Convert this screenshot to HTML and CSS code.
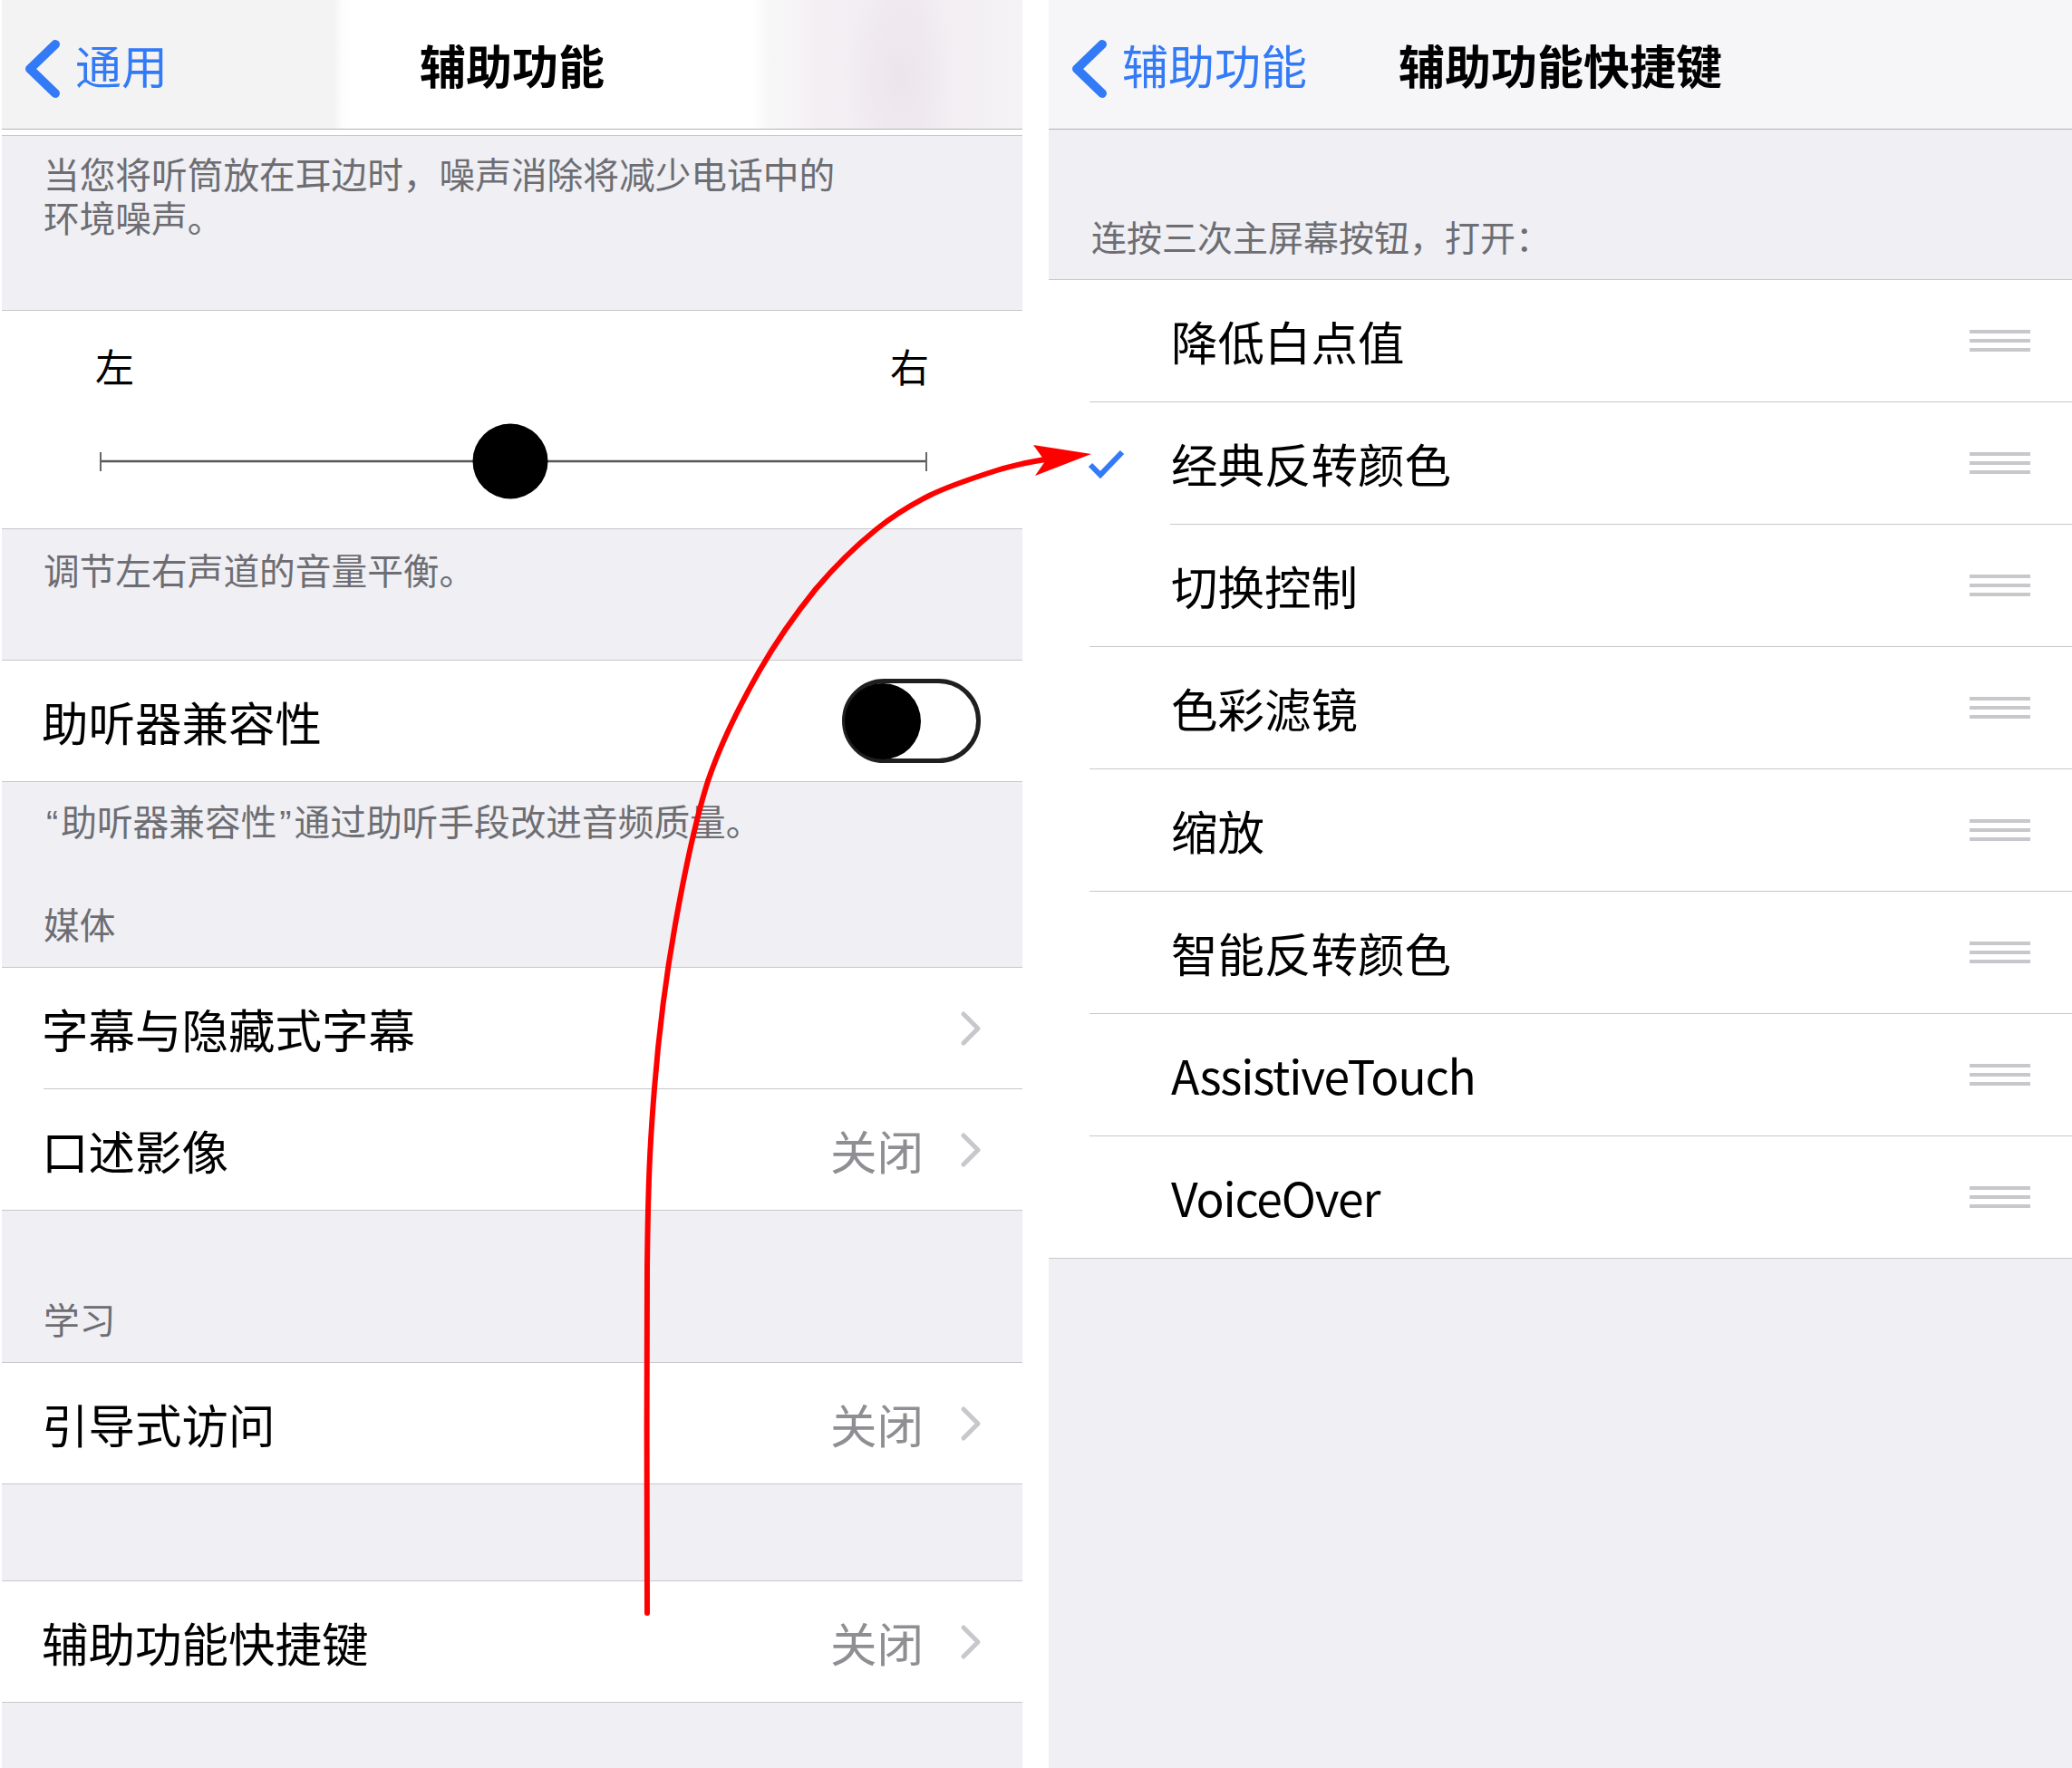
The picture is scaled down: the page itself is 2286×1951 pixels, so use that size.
FILE: index.html
```html
<!DOCTYPE html>
<html lang="zh-CN">
<head>
<meta charset="utf-8">
<title>辅助功能</title>
<link rel="stylesheet" href="styles.css">
</head>
<body>
<div class="screen">

  <!-- Settings › General › Accessibility -->
  <section class="panel panel-left">
    <header class="nav nav-wallpaper">
      <a class="nav-back">
        <svg class="back-chevron" viewBox="0 0 38 64"><polyline points="33,5 5,32 33,59"/></svg>
        <span>通用</span>
      </a>
      <h1 class="nav-title">辅助功能</h1>
      <span></span>
    </header>
    <div class="nav-gap"></div>

    <div class="footer footer-first">
      <p>当您将听筒放在耳边时，噪声消除将减少电话中的<br>环境噪声。</p>
    </div>

    <div class="group">
      <div class="balance">
        <div class="balance-labels"><span>左</span><span>右</span></div>
        <svg class="balance-track" viewBox="0 0 920 84">
          <line class="track-line" x1="6" y1="42" x2="917" y2="42"/>
          <line class="track-cap" x1="6" y1="32" x2="6" y2="53"/>
          <line class="track-cap" x1="917" y1="32" x2="917" y2="53"/>
          <circle cx="458" cy="42" r="41.5"/>
        </svg>
      </div>
    </div>

    <div class="footer footer-balance"><p>调节左右声道的音量平衡。</p></div>

    <div class="group">
      <div class="cell">
        <span class="cell-label">助听器兼容性</span>
        <span class="switch"><span class="switch-knob"></span></span>
      </div>
    </div>

    <div class="footer footer-hac">
      <p><span class="quote">“</span>助听器兼容性<span class="quote">”</span>通过助听手段改进音频质量。</p>
      <p class="section-title">媒体</p>
    </div>

    <div class="group">
      <div class="cell">
        <span class="cell-label">字幕与隐藏式字幕</span>
        <svg class="chevron" viewBox="0 0 24 40"><polyline points="4,4 20,20 4,36"/></svg>
      </div>
      <div class="cell">
        <span class="cell-label">口述影像</span>
        <span class="detail">关闭</span>
        <svg class="chevron" viewBox="0 0 24 40"><polyline points="4,4 20,20 4,36"/></svg>
      </div>
    </div>

    <div class="footer footer-learn"><p>学习</p></div>

    <div class="group">
      <div class="cell">
        <span class="cell-label">引导式访问</span>
        <span class="detail">关闭</span>
        <svg class="chevron" viewBox="0 0 24 40"><polyline points="4,4 20,20 4,36"/></svg>
      </div>
    </div>

    <div class="spacer"></div>

    <div class="group">
      <div class="cell">
        <span class="cell-label">辅助功能快捷键</span>
        <span class="detail">关闭</span>
        <svg class="chevron" viewBox="0 0 24 40"><polyline points="4,4 20,20 4,36"/></svg>
      </div>
    </div>

    <div class="fill"></div>
  </section>

  <!-- Accessibility › Accessibility Shortcut -->
  <section class="panel panel-right">
    <header class="nav nav-plain">
      <a class="nav-back">
        <svg class="back-chevron" viewBox="0 0 38 64"><polyline points="33,5 5,32 33,59"/></svg>
        <span>辅助功能</span>
      </a>
      <h1 class="nav-title">辅助功能快捷键</h1>
      <span></span>
    </header>

    <div class="list-header"><p>连按三次主屏幕按钮，打开：</p></div>

    <div class="list">
      <div class="srow">
        <span class="check-col"></span>
        <div class="srow-main"><span>降低白点值</span><svg class="handle" viewBox="0 0 67 24"><rect y="0" width="67" height="4"/><rect y="10" width="67" height="4"/><rect y="20" width="67" height="4"/></svg></div>
      </div>
      <div class="srow inner-sep">
        <span class="check-col"><svg class="check" viewBox="0 0 42 32"><polyline points="3,17 14,28 38,3"/></svg></span>
        <div class="srow-main"><span>经典反转颜色</span><svg class="handle" viewBox="0 0 67 24"><rect y="0" width="67" height="4"/><rect y="10" width="67" height="4"/><rect y="20" width="67" height="4"/></svg></div>
      </div>
      <div class="srow">
        <span class="check-col"></span>
        <div class="srow-main"><span>切换控制</span><svg class="handle" viewBox="0 0 67 24"><rect y="0" width="67" height="4"/><rect y="10" width="67" height="4"/><rect y="20" width="67" height="4"/></svg></div>
      </div>
      <div class="srow">
        <span class="check-col"></span>
        <div class="srow-main"><span>色彩滤镜</span><svg class="handle" viewBox="0 0 67 24"><rect y="0" width="67" height="4"/><rect y="10" width="67" height="4"/><rect y="20" width="67" height="4"/></svg></div>
      </div>
      <div class="srow">
        <span class="check-col"></span>
        <div class="srow-main"><span>缩放</span><svg class="handle" viewBox="0 0 67 24"><rect y="0" width="67" height="4"/><rect y="10" width="67" height="4"/><rect y="20" width="67" height="4"/></svg></div>
      </div>
      <div class="srow">
        <span class="check-col"></span>
        <div class="srow-main"><span>智能反转颜色</span><svg class="handle" viewBox="0 0 67 24"><rect y="0" width="67" height="4"/><rect y="10" width="67" height="4"/><rect y="20" width="67" height="4"/></svg></div>
      </div>
      <div class="srow">
        <span class="check-col"></span>
        <div class="srow-main"><span class="latin">AssistiveTouch</span><svg class="handle" viewBox="0 0 67 24"><rect y="0" width="67" height="4"/><rect y="10" width="67" height="4"/><rect y="20" width="67" height="4"/></svg></div>
      </div>
      <div class="srow">
        <span class="check-col"></span>
        <div class="srow-main"><span class="latin">VoiceOver</span><svg class="handle" viewBox="0 0 67 24"><rect y="0" width="67" height="4"/><rect y="10" width="67" height="4"/><rect y="20" width="67" height="4"/></svg></div>
      </div>
    </div>

    <div class="fill"></div>
  </section>

  <!-- hand-drawn pointer from the shortcut row to the selected option -->
  <svg class="annotation" viewBox="0 0 2286 1951">
    <path class="annotation-line" d="M714,1780 C714,1716 713,1496 714,1400 C715,1303 717,1264 722,1201 C727,1138 735,1076 745,1020 C755,964 766,909 781,862 C797,815 818,775 838,740 C858,705 879,676 900,650 C922,624 946,601 967,584 C988,567 1003,558 1025,547 C1047,536 1078,526 1100,519 C1122,512 1140,509 1160,506"/>
    <polygon class="annotation-head" points="1204,501 1140,491 1153,509 1142,525"/>
  </svg>
</div>
</body>
</html>
```

FILE: styles.css
```css
* {
  box-sizing: border-box;
  margin: 0;
  padding: 0;
}

body {
  background: #fff;
  font-family: "Noto Sans CJK SC", "Noto Sans", sans-serif;
  color: #000;
}

.screen {
  position: relative;
  display: flex;
  width: 2286px;
  height: 1951px;
  overflow: hidden;
  background: #fff;
}

.panel {
  display: flex;
  flex-direction: column;
  background: #efeff4;
}

.panel-left {
  width: 1126px;
  margin-left: 2px;
}

.panel-right {
  flex: 1;
  margin-left: 29px;
}

/* navigation bar */
.nav {
  flex: none;
  height: 143px;
  padding-top: 10px;
  border-bottom: 1px solid #b3b3b6;
  display: grid;
  grid-template-columns: 1fr auto 1fr;
  align-items: center;
  font-family: "Liberation Sans", "Noto Sans CJK SC", sans-serif;
}

.nav-wallpaper {
  background:
    radial-gradient(ellipse 60px 120px at 990px 85px, rgba(228, 214, 227, 0.35), rgba(228, 214, 227, 0)),
    linear-gradient(90deg,
      #f3f3f3 0, #f3f3f3 366px, #fdfdfd 376px, #fff 390px,
      #fff 828px, #f8f7f8 846px, #f6f4f6 880px, #f3eff3 900px,
      #f1ecf1 1010px, #f3f0f3 1070px, #f5f3f5 1126px);
}

.nav-plain {
  background: #f6f6f8;
}

.nav-back {
  display: flex;
  align-items: center;
  gap: 17px;
  padding-left: 26px;
  color: #337af7;
  font-size: 51px;
  line-height: 60px;
  white-space: nowrap;
}

.back-chevron {
  width: 38px;
  height: 64px;
  flex: none;
  fill: none;
  stroke: #337af7;
  stroke-width: 10;
  stroke-linecap: round;
  stroke-linejoin: round;
}

.nav-title {
  font-size: 51px;
  font-weight: 700;
  line-height: 60px;
  white-space: nowrap;
}

.nav-gap {
  flex: none;
  height: 6px;
  background: #fff;
}

/* grouped table sections */
.footer {
  flex: none;
  padding-left: 46px;
  color: #6d6d72;
  font-family: "Liberation Sans", "Noto Sans CJK SC", sans-serif;
  font-size: 39.7px;
  line-height: 48px;
}

.quote {
  padding: 0 3px;
}

.footer-first {
  height: 193px;
  padding-top: 20px;
  border-top: 1px solid #c8c7cc;
}

.footer-balance {
  height: 144px;
  padding-top: 23px;
}

.footer-hac {
  height: 204px;
  padding-top: 21px;
}

.section-title {
  margin-top: 66px;
}

.footer-learn {
  height: 167px;
  padding-top: 98px;
}

.spacer {
  flex: none;
  height: 106px;
}

.fill {
  flex: 1;
}

.group {
  flex: none;
  background: #fff;
  border-top: 1px solid #c8c7cc;
  border-bottom: 1px solid #c8c7cc;
}

.cell {
  display: flex;
  align-items: center;
  height: 133px;
  margin-left: 46px;
  padding-right: 45px;
  font-size: 51.5px;
  line-height: 60px;
}

.cell + .cell {
  height: 134px;
  border-top: 1px solid #c8c7cc;
}

.cell-label {
  flex: 1;
  margin-left: -2px;
  white-space: nowrap;
}

.detail {
  color: #8e8e93;
  margin-right: 40px;
}

.chevron {
  width: 24px;
  height: 40px;
  flex: none;
  fill: none;
  stroke: #c7c7cc;
  stroke-width: 5;
  stroke-linecap: round;
  stroke-linejoin: round;
}

/* stereo balance slider */
.balance {
  height: 240px;
  padding: 35px 103px 0;
}

.balance-labels {
  display: flex;
  justify-content: space-between;
  font-size: 43px;
  line-height: 50px;
}

.balance-track {
  display: block;
  width: 920px;
  height: 84px;
  margin-top: 39px;
}

.track-line {
  stroke: #555;
  stroke-width: 2.5;
}

.track-cap {
  stroke: #666;
  stroke-width: 2;
}

.balance-track circle {
  fill: #000;
}

/* switch, off state */
.switch {
  flex: none;
  display: flex;
  align-items: center;
  width: 153px;
  height: 93px;
  margin-right: 1px;
  border: 5px solid #1f1f1f;
  border-radius: 47px;
  background: #fff;
}

.switch-knob {
  width: 84px;
  height: 84px;
  margin-left: -2px;
  border-radius: 50%;
  background: #000;
}

/* shortcut list */
.list-header {
  flex: none;
  height: 165px;
  padding: 97px 0 0 47px;
  color: #6d6d72;
  font-family: "Liberation Sans", "Noto Sans CJK SC", sans-serif;
  font-size: 39px;
  line-height: 48px;
}

.list {
  flex: none;
  background: #fff;
  border-top: 1px solid #c8c7cc;
  border-bottom: 1px solid #c8c7cc;
}

.srow {
  display: flex;
  height: 135px;
  margin-left: 45px;
  border-bottom: 1px solid #c8c7cc;
}

.srow:last-child {
  height: 134px;
  border-bottom: none;
}

.srow.inner-sep {
  border-bottom: none;
}

.check-col {
  flex: none;
  width: 90px;
  display: flex;
  align-items: center;
}

.check {
  width: 42px;
  height: 32px;
  margin-left: -2px;
  fill: none;
  stroke: #337af7;
  stroke-width: 6;
  stroke-linejoin: miter;
}

.srow-main {
  flex: 1;
  display: flex;
  align-items: center;
  justify-content: space-between;
  padding-right: 46px;
  font-size: 51.5px;
  line-height: 60px;
  white-space: nowrap;
}

.srow.inner-sep .srow-main {
  margin-left: -1px;
  padding-left: 1px;
  border-bottom: 1px solid #c8c7cc;
}

.latin {
  letter-spacing: -1.2px;
}

.handle {
  flex: none;
  width: 67px;
  height: 24px;
  fill: #c7c7cc;
}

/* red pointer drawn over both screens */
.annotation {
  position: absolute;
  left: 0;
  top: 0;
  width: 2286px;
  height: 1951px;
  pointer-events: none;
}

.annotation-line {
  fill: none;
  stroke: #f00;
  stroke-width: 6;
  stroke-linecap: round;
}

.annotation-head {
  fill: #f00;
}
```
